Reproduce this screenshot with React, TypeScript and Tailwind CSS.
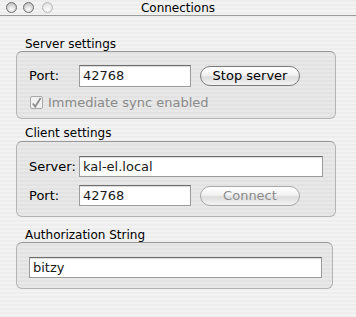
import React from "react";

const stripes =
  "bg-[repeating-linear-gradient(180deg,#ededed_0px,#ededed_2px,#f3f3f3_2px,#f3f3f3_4px)]";

function Light({ dim }: { dim?: boolean }) {
  return (
    <div
      className={
        dim
          ? "w-[11px] h-[11px] rounded-full border border-[#b8b8b8] bg-[radial-gradient(circle_at_50%_70%,#ffffff,#d6d6d6)]"
          : "w-[11px] h-[11px] rounded-full border border-[#6f6f6f] bg-[radial-gradient(circle_at_50%_70%,#ffffff,#b0b0b0)]"
      }
    />
  );
}

function Field({ value, className }: { value: string; className: string }) {
  return (
    <div
      className={`${className} bg-white border border-[#9c9c9c] border-t-[#6e6e6e] shadow-[inset_0_1px_1px_rgba(0,0,0,0.15)] flex items-center pl-[3px] text-[13px] text-[#1a1a1a]`}
    >
      {value}
    </div>
  );
}

function Button({ label, disabled }: { label: string; disabled?: boolean }) {
  return (
    <div
      className={`w-[100px] h-[20px] rounded-full border bg-[linear-gradient(180deg,#ffffff_0%,#f2f2f2_45%,#dcdcdc_55%,#f4f4f4_100%)] flex items-center justify-center text-[13px] ${
        disabled ? "text-[#8c8c8c] border-[#a8a8a8]" : "text-black border-[#7a7a7a]"
      }`}
    >
      {label}
    </div>
  );
}

export default function App() {
  return (
    <div
      className={`w-[356px] h-[317px] ${stripes} text-black`}
      style={{ fontFamily: "'DejaVu Sans', 'Liberation Sans', sans-serif" }}
    >
      {/* title bar */}
      <div className="relative h-[16px] border-b border-[#9a9a9a] flex items-center">
        <div className="flex items-center pl-[6px] gap-[6px]">
          <Light />
          <Light />
          <div className="ml-[2px]">
            <Light dim />
          </div>
        </div>
        <div className="absolute inset-0 flex items-center justify-center text-[12px] leading-none">
          Connections
        </div>
      </div>

      <div className="pl-[16px] pt-[21px] flex flex-col">
        {/* Server settings */}
        <div className="pl-[9px] text-[12px] leading-[14px]">Server settings</div>
        <div className="w-[320px] h-[68px] rounded-[6px] border border-[#b4b4b4] border-t-[#979797] bg-black/[0.045] pl-[12px] pt-[13px]">
          <div className="flex items-center">
            <div className="w-[50px] text-[13px]">Port:</div>
            <Field value="42768" className="w-[112px] h-[22px]" />
            <div className="ml-[9px]">
              <Button label="Stop server" />
            </div>
          </div>
          <div className="flex items-center mt-[6px] ml-[1px]">
            <div className="w-[13px] h-[13px] rounded-[2px] border border-[#a9a9a9] bg-[#f1f1f1] flex items-center justify-center">
              <svg width="12" height="12" viewBox="0 0 12 12">
                <path d="M2 6.5 L4.6 10 L10.5 0.5" fill="none" stroke="#8e8e8e" strokeWidth="2" />
              </svg>
            </div>
            <div className="ml-[5px] text-[13px] text-[#8a8a8a]">Immediate sync enabled</div>
          </div>
        </div>

        {/* Client settings */}
        <div className="pl-[9px] mt-[7px] text-[12px] leading-[14px]">Client settings</div>
        <div className="mt-[1px] w-[320px] h-[76px] rounded-[6px] border border-[#b4b4b4] border-t-[#979797] bg-black/[0.045] pl-[12px] pt-[14px]">
          <div className="flex items-center">
            <div className="w-[50px] text-[13px]">Server:</div>
            <Field value="kal-el.local" className="w-[244px] h-[21px]" />
          </div>
          <div className="flex items-center mt-[8px]">
            <div className="w-[50px] text-[13px]">Port:</div>
            <Field value="42768" className="w-[112px] h-[21px]" />
            <div className="ml-[9px]">
              <Button label="Connect" disabled />
            </div>
          </div>
        </div>

        {/* Authorization String */}
        <div className="pl-[9px] mt-[11px] text-[12px] leading-[14px]">Authorization String</div>
        <div className="w-[317px] h-[47px] rounded-[6px] border border-[#b4b4b4] border-t-[#979797] bg-black/[0.045] pl-[12px] pt-[14px]">
          <Field value="bitzy" className="w-[293px] h-[21px]" />
        </div>
      </div>
    </div>
  );
}
